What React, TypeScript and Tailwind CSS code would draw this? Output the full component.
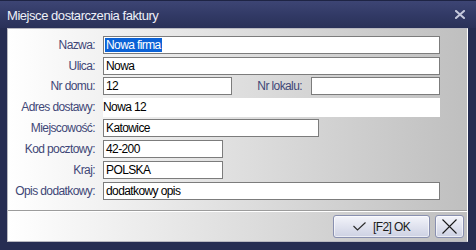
import React from "react";

const F = "font-['Liberation_Sans',Arial,sans-serif]";

function Label({ children, w = "w-[88px]" }: { children: React.ReactNode; w?: string }) {
  return (
    <div className={`${w} shrink-0 whitespace-nowrap text-right text-[12px] tracking-[-0.6px] leading-none text-[#3f4777] pr-[1px]`}>
      {children}
    </div>
  );
}

function Field({ w, children }: { w: string; children?: React.ReactNode }) {
  return (
    <div
      className={`${w} h-[18px] shrink-0 border border-[#7c7c7c] bg-white flex items-center pl-[1px] text-[12px] tracking-[-0.6px] whitespace-nowrap leading-none text-black`}
    >
      {children}
    </div>
  );
}

function Row({ label, children }: { label: string; children: React.ReactNode }) {
  return (
    <div className="flex items-center h-[18px]">
      <Label>{label}</Label>
      <div className="ml-[7px] flex items-center">{children}</div>
    </div>
  );
}

export default function App() {
  return (
    <div className={`${F} w-[476px] h-[250px] bg-[#262d52] flex flex-col select-none`}>
      {/* Title bar */}
      <div className="h-[28px] shrink-0 flex items-center justify-between bg-gradient-to-b from-[#3d4574] via-[#323a66] to-[#2a3158] border-t border-[#1e2444] pl-[7px] pr-[11px]">
        <span className="text-[13px] tracking-[-0.45px] leading-none text-[#eef0f8] pt-[1px]">Miejsce dostarczenia faktury</span>
        <svg width="10" height="9" viewBox="0 0 10 9" className="mb-[1px]">
          <path d="M1 1 L9 8 M9 1 L1 8" stroke="#c4c8dc" strokeWidth="2" strokeLinecap="square" />
        </svg>
      </div>

      {/* Body */}
      <div className="flex-1 pl-[7px] pr-[8px] pb-[8px] flex">
        <div className="flex-1 flex flex-col border-l border-t border-b border-[#b8b8c0] border-r border-r-white bg-gradient-to-r from-white to-[#bfbfbf]">
          {/* Form */}
          <div className="h-[181px] shrink-0 pt-[7px] flex flex-col gap-[3px]">
            <Row label="Nazwa:">
              <Field w="w-[337px]">
                <span className="bg-[#0b62d6] text-white px-[1px] h-[14px] flex items-center">Nowa firma</span>
              </Field>
            </Row>
            <Row label="Ulica:">
              <Field w="w-[337px]">
                <span className="pl-[1px]">Nowa</span>
              </Field>
            </Row>
            <div className="flex items-center h-[18px] -mt-[1px]">
              <Label>Nr domu:</Label>
              <div className="ml-[7px] flex items-center">
                <Field w="w-[129px]">
                  <span className="pl-[1px]">12</span>
                </Field>
                <Label w="w-[71px]">Nr lokalu:</Label>
                <div className="ml-[8px]">
                  <Field w="w-[129px]" />
                </div>
              </div>
            </div>
            <div className="flex items-center h-[18px]">
              <Label>Adres dostawy:</Label>
              <div className="ml-[7px] w-[337px] h-[19px] bg-white flex items-center text-[12px] tracking-[-0.6px] leading-none text-black">
                Nowa 12
              </div>
            </div>
            <Row label="Miejscowość:">
              <Field w="w-[216px]">
                <span className="pl-[1px]">Katowice</span>
              </Field>
            </Row>
            <Row label="Kod pocztowy:">
              <Field w="w-[120px]">
                <span className="pl-[1px]">42-200</span>
              </Field>
            </Row>
            <Row label="Kraj:">
              <Field w="w-[120px]">
                <span className="pl-[1px]">POLSKA</span>
              </Field>
            </Row>
            <Row label="Opis dodatkowy:">
              <Field w="w-[337px]">
                <span className="pl-[1px]">dodatkowy opis</span>
              </Field>
            </Row>
          </div>

          {/* Separator */}
          <div className="h-[1px] bg-[#9c9c9c]" />
          <div className="h-[1px] bg-white" />

          {/* Buttons */}
          <div className="flex-1 flex justify-end items-start pt-[3px] pr-[3px] gap-[5px]">
            <button className="w-[97px] h-[23px] rounded-[3px] border border-[#8990b0] bg-gradient-to-b from-[#f3f4fa] to-[#cdd1e3] shadow-[inset_0_0_0_1px_rgba(255,255,255,0.6)] flex items-center justify-center gap-[7px] text-[12px] tracking-[-0.6px] leading-none text-[#1a1a1a]">
              <svg width="13" height="9" viewBox="0 0 13 9">
                <path d="M0.5 4 L4.5 8 L12.5 0.5" fill="none" stroke="#2a2a2a" strokeWidth="1.1" />
              </svg>
              <span>[F2] OK</span>
            </button>
            <button className="w-[29px] h-[23px] rounded-[3px] border border-[#8990b0] bg-gradient-to-b from-[#f3f4fa] to-[#cdd1e3] shadow-[inset_0_0_0_1px_rgba(255,255,255,0.6)] flex items-center justify-center">
              <svg width="15" height="15" viewBox="0 0 15 15">
                <path d="M0.5 0.5 L14.5 14.5 M14.5 0.5 L0.5 14.5" stroke="#1a1a1a" strokeWidth="1.1" />
              </svg>
            </button>
          </div>
        </div>
      </div>
    </div>
  );
}
